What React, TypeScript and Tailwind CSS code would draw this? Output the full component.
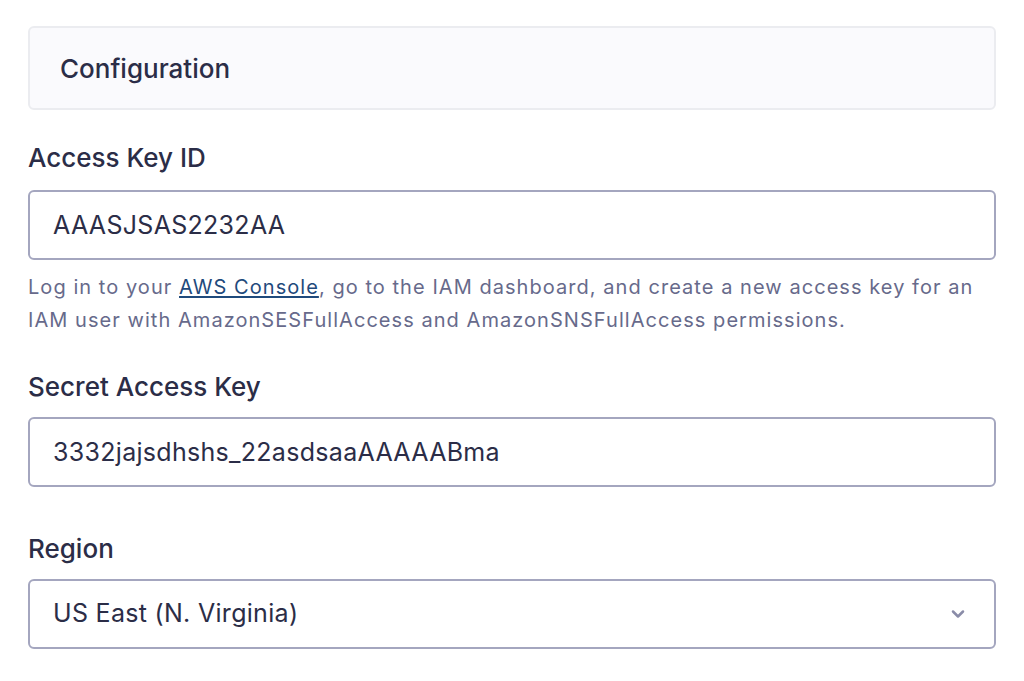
import { ChevronDown } from 'lucide-react';

const labelCls = 'block text-[26px] leading-[32px] font-medium text-[#2b2d47]';
const inputCls =
  'w-full h-[70px] rounded-md border-2 border-[#a4a6bf] bg-white px-[23px] text-[25px] tracking-[0.3px] text-[#2b2d47] outline-none';

export default function App() {
  return (
    <div
      className="min-h-screen bg-white px-[28px] pt-[26px]"
      style={{ fontFamily: 'Inter, "Noto Sans", sans-serif' }}
    >
      <div className="h-[84px] flex items-center rounded-md border-2 border-[#ebecf0] bg-[#fafafd] px-[30px]">
        <h2 className="text-[26px] font-medium text-[#2b2d47]">Configuration</h2>
      </div>

      <div className="mt-[32px]">
        <label className={labelCls}>Access Key ID</label>
        <input className={`${inputCls} mt-[16px]`} defaultValue="AAASJSAS2232AA" />
        <p className="mt-[11px] text-[20px] leading-[33px] tracking-[1.05px] text-[#676a8b]">
          Log in to your{' '}
          <a href="#" className="underline text-[#1f4a7c] underline-offset-2">
            AWS Console
          </a>
          , go to the IAM dashboard, and create a new access key for an IAM user with
          AmazonSESFullAccess and AmazonSNSFullAccess permissions.
        </p>
      </div>

      <div className="mt-[34px]">
        <label className={labelCls}>Secret Access Key</label>
        <input className={`${inputCls} mt-[14px]`} defaultValue="3332jajsdhshs_22asdsaaAAAAABma" />
      </div>

      <div className="mt-[46px]">
        <label className={labelCls}>Region</label>
        <div className="relative mt-[14px]">
          <select className={`${inputCls} appearance-none`} defaultValue="us-east-1">
            <option value="us-east-1">US East (N. Virginia)</option>
            <option value="us-east-2">US East (Ohio)</option>
            <option value="us-west-2">US West (Oregon)</option>
          </select>
          <ChevronDown
            className="pointer-events-none absolute right-[28px] top-1/2 -translate-y-1/2 text-[#8a8ca8]"
            size={20}
            strokeWidth={3}
          />
        </div>
      </div>
    </div>
  );
}
